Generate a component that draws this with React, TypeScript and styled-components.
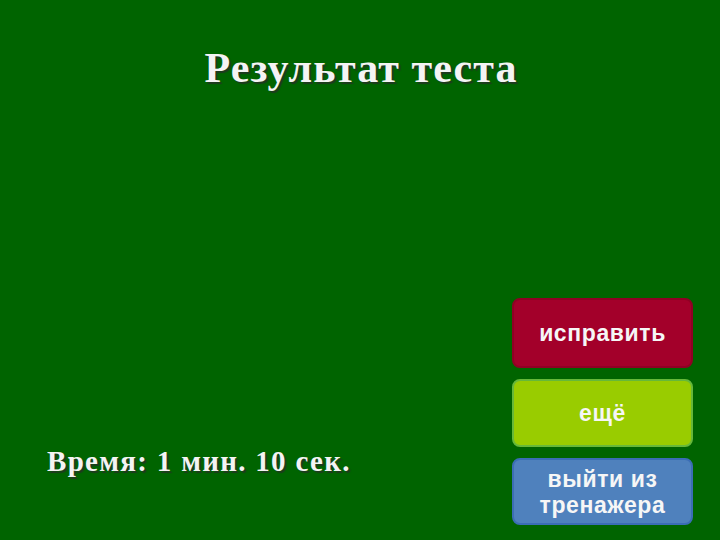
import React from 'react';
import styled, { createGlobalStyle } from 'styled-components';

const GlobalStyle = createGlobalStyle`
  html, body {
    margin: 0;
    padding: 0;
    background-color: #006400;
  }
`;

const Slide = styled.div`
  width: 720px;
  height: 540px;
  background-color: #006400;
  display: flex;
  flex-direction: column;
  overflow: hidden;
`;

const Title = styled.h1`
  margin: 47px 0 0;
  padding-left: 2px;
  text-align: center;
  font-family: 'Liberation Serif', 'Times New Roman', serif;
  font-weight: bold;
  font-size: 42px;
  letter-spacing: 1.1px;
  line-height: 1;
  color: #f4f4f4;
  text-shadow: 2px 2px 1px #1f3a1f;
`;

const Footer = styled.div`
  margin-top: auto;
  display: flex;
  justify-content: space-between;
  align-items: flex-end;
  padding: 0 27px 15px 47px;
`;

const TimeText = styled.div`
  margin-bottom: 49px;
  font-family: 'Liberation Serif', 'Times New Roman', serif;
  font-weight: bold;
  font-size: 29px;
  letter-spacing: 1.3px;
  line-height: 1;
  color: #f4f4f4;
  text-shadow: 2px 2px 1px #1f3a1f;
`;

const ButtonColumn = styled.div`
  display: flex;
  flex-direction: column;
  gap: 11px;
  width: 181px;
`;

type Tone = 'red' | 'lime' | 'blue';

const tones: Record<Tone, { bg: string; border: string }> = {
  red: { bg: '#a3002a', border: '#8f0024' },
  lime: { bg: '#99cc00', border: '#66b83a' },
  blue: { bg: '#4f81bd', border: '#3b6db5' },
};

const ActionButton = styled.button<{ $tone: Tone; $height: number }>`
  box-sizing: border-box;
  width: 100%;
  height: ${p => p.$height}px;
  display: flex;
  align-items: center;
  justify-content: center;
  padding: 0 6px;
  background-color: ${p => tones[p.$tone].bg};
  border: 2px solid ${p => tones[p.$tone].border};
  border-radius: 8px;
  font-family: 'Liberation Sans', Arial, sans-serif;
  font-weight: bold;
  font-size: 23px;
  letter-spacing: 0.6px;
  line-height: 26px;
  color: #f6f6f6;
  text-align: center;
  cursor: pointer;
`;

export default function App() {
  return (
    <Slide>
      <GlobalStyle />
      <Title>Результат теста</Title>
      <Footer>
        <TimeText>Время: 1 мин. 10 сек.</TimeText>
        <ButtonColumn>
          <ActionButton $tone="red" $height={70}>исправить</ActionButton>
          <ActionButton $tone="lime" $height={68}>ещё</ActionButton>
          <ActionButton $tone="blue" $height={67}>
            выйти из
            <br />
            тренажера
          </ActionButton>
        </ButtonColumn>
      </Footer>
    </Slide>
  );
}
